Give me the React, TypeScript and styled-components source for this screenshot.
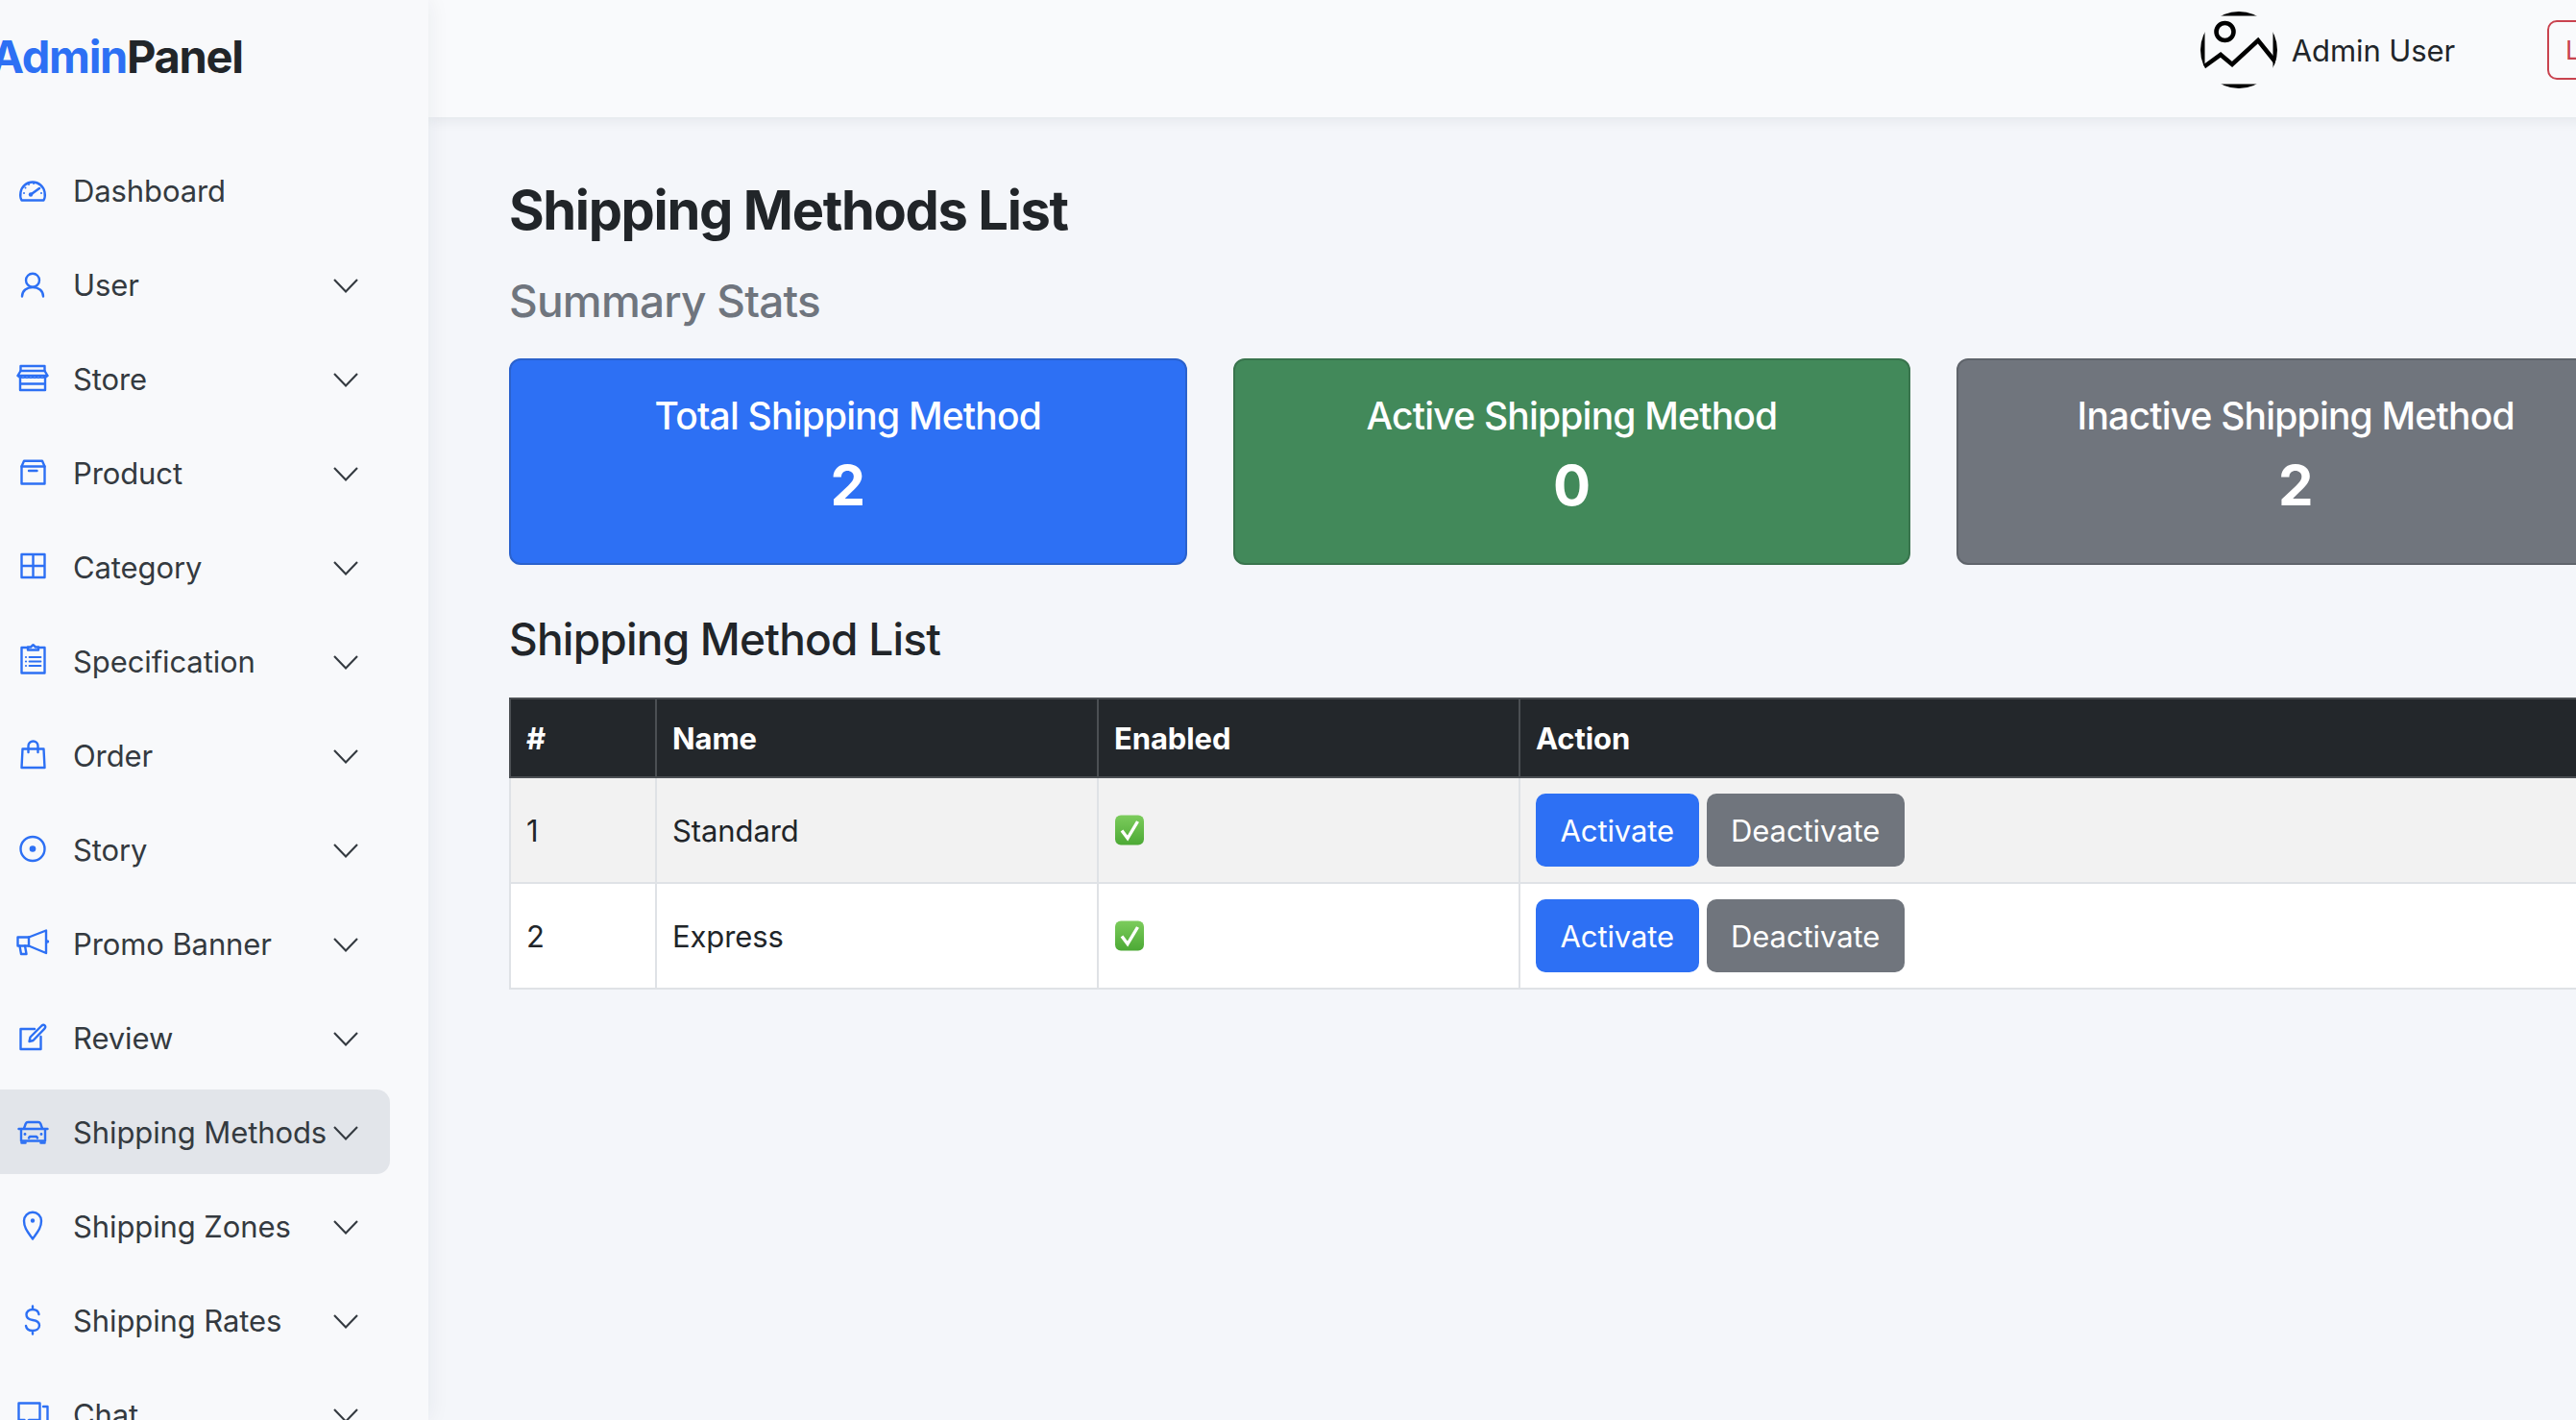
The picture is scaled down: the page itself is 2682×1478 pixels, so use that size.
import React from "react";
import styled, { createGlobalStyle } from "styled-components";

const GlobalStyle = createGlobalStyle`
  html, body {
    margin: 0;
    height: 100%;
    overflow: hidden;
    background: #f4f6fa;
    font-family: "Inter", "Liberation Sans", sans-serif;
    color: #212529;
  }
  * {
    box-sizing: border-box;
  }
`;

const Shell = styled.div`
  display: flex;
  width: 2843px;
  height: 1478px;
  margin-left: -18px;
  overflow: hidden;
`;

const Sidebar = styled.aside`
  flex: 0 0 464px;
  height: 1478px;
  background: #f8f9fb;
  box-shadow: 0 0 22px rgba(30, 40, 60, 0.07);
  overflow: hidden;
  position: relative;
  z-index: 2;
`;

const Logo = styled.div`
  height: 122px;
  padding: 35px 0 0 8px;
  font-size: 47px;
  line-height: 48px;
  font-weight: 700;
  letter-spacing: -1.3px;
  color: #212529;

  span {
    color: #2d70f4;
  }
`;

const Menu = styled.nav`
  display: flex;
  flex-direction: column;
  gap: 10px;
  padding: 32px 40px 0 0;
`;

const MenuItem = styled.a<{ $active?: boolean }>`
  display: flex;
  align-items: center;
  height: 88px;
  flex: none;
  padding: 0 33px 0 35px;
  border-radius: 0 14px 14px 0;
  font-size: 31px;
  letter-spacing: -0.1px;
  color: #343a40;
  background: ${(p) => (p.$active ? "#e2e5ea" : "transparent")};
`;

const MenuLabel = styled.span`
  margin-left: 25px;
  white-space: nowrap;
`;

const Chevron = styled.svg`
  flex: none;
  width: 26px;
  height: 15px;
  margin: 2px 0 0 auto;
  fill: none;
  stroke: #343a40;
  stroke-width: 2.1;
`;

const Glyph = styled.svg`
  flex: none;
  width: 34px;
  height: 34px;
  margin-top: 1px;
  overflow: visible;
  fill: none;
  stroke: #2d70f4;
  stroke-width: 2.4;
  stroke-linejoin: round;
  stroke-linecap: round;

  .solid {
    fill: #2d70f4;
    stroke: none;
  }
`;

const Main = styled.div`
  flex: 0 0 2379px;
  display: flex;
  flex-direction: column;
`;

const TopBar = styled.header`
  flex: none;
  height: 122px;
  display: flex;
  align-items: center;
  justify-content: flex-end;
  padding: 0 43px 18px 0;
  background: #f9fafc;
  box-shadow: 0 2px 14px rgba(30, 40, 60, 0.09);
`;

const UserName = styled.span`
  margin: 0 96px 0 15px;
  font-size: 31px;
  letter-spacing: -0.1px;
  color: #212529;
`;

const LogoutButton = styled.button`
  width: 130px;
  height: 62px;
  padding: 0 0 0 17px;
  text-align: left;
  background: transparent;
  border: 2px solid #c9434f;
  border-radius: 10px;
  font: inherit;
  font-size: 27px;
  color: #c9434f;
`;

const Content = styled.main`
  padding: 0 82px 0 84px;
`;

const PageTitle = styled.h1`
  margin: 62px 0 0;
  font-size: 56px;
  line-height: 70px;
  font-weight: 700;
  letter-spacing: -1.35px;
  color: #212529;
`;

const SubTitle = styled.h2<{ $muted?: boolean }>`
  margin: ${(p) => (p.$muted ? "31px 0 32px" : "49px 0 33px")};
  font-size: 46px;
  line-height: 56px;
  font-weight: 500;
  letter-spacing: -0.78px;
  color: ${(p) => (p.$muted ? "#6f757e" : "#212529")};
`;

const StatGrid = styled.section`
  display: grid;
  grid-template-columns: repeat(3, 1fr);
  gap: 48px;
`;

const StatCard = styled.div<{ $bg: string; $line: string }>`
  height: 215px;
  padding-top: 33px;
  border: 2px solid ${(p) => p.$line};
  border-radius: 12px;
  background: ${(p) => p.$bg};
  color: #fff;
  text-align: center;
`;

const StatTitle = styled.div`
  font-size: 39px;
  line-height: 50px;
  font-weight: 500;
  letter-spacing: -0.8px;
`;

const StatValue = styled.div`
  margin-top: 12px;
  font-size: 58px;
  line-height: 70px;
  font-weight: 700;
`;

const Table = styled.table`
  width: 100%;
  table-layout: fixed;
  border-collapse: collapse;
  font-size: 31px;
  letter-spacing: -0.1px;
  color: #212529;
`;

const HeadCell = styled.th<{ $w?: number }>`
  width: ${(p) => (p.$w ? `${p.$w}px` : "auto")};
  height: 82px;
  padding: 0 16px;
  text-align: left;
  font-weight: 700;
  color: #fff;
  background: #23272b;
  border: 2px solid #4b4f53;
`;

const Row = styled.tr<{ $striped?: boolean }>`
  background: ${(p) => (p.$striped ? "#f2f2f2" : "#ffffff")};
`;

const Cell = styled.td`
  height: 110px;
  padding: 0 16px;
  border: 2px solid #dfe2e6;
`;

const ActionRow = styled.div`
  display: flex;
  gap: 8px;
`;

const ActionButton = styled.button<{ $bg: string }>`
  height: 76px;
  padding: 0 25.5px;
  border: none;
  border-radius: 10px;
  font: inherit;
  letter-spacing: inherit;
  color: #fff;
  background: ${(p) => p.$bg};
`;

const CheckMark = styled.svg`
  display: block;
  width: 32px;
  height: 32px;
`;

const icons: Record<string, React.ReactNode> = {
  gauge: (
    <>
      <path d="M5.5 26.5C4.3 24.5 4 21 4.5 18A12.7 12.7 0 0 1 29.5 18C30 21 29.7 24.5 28.5 26.5Z" />
      <path d="M15 20.5L24 14" strokeWidth="2.6" />
      <circle className="solid" cx="15" cy="20.5" r="2.2" />
      <circle className="solid" cx="8" cy="19" r="1" />
      <circle className="solid" cx="9.5" cy="13.5" r="1" />
      <circle className="solid" cx="13" cy="10" r="1" />
      <circle className="solid" cx="18" cy="9" r="1" />
      <circle className="solid" cx="26" cy="19" r="1" />
    </>
  ),
  user: (
    <>
      <circle cx="17" cy="11.7" r="7" />
      <path d="M6 28.5C6 22.5 11 19 17 19S28 22.5 28 28.5" />
    </>
  ),
  store: (
    <>
      <path d="M4.5 3H29.5V8H4.5Z" />
      <path d="M4.5 8L1.5 13H32.5L29.5 8" />
      <path d="M1.5 13Q3 16 5 14.5Q7 16 9 14.5Q11 16 13 14.5Q15 16 17 14.5Q19 16 21 14.5Q23 16 25 14.5Q27 16 29 14.5Q31 16 32.5 13" strokeWidth="1.6" />
      <path d="M4 15.5V28H30V15.5M4 21.5H30" />
    </>
  ),
  box: (
    <>
      <path d="M5.5 9.5L8 3.8H27L29.5 9.5V27.5H5.5Z" />
      <path d="M5.5 9.5H29.5M13 14H21.5" />
    </>
  ),
  grid: <path d="M5.5 3H29.5V27H5.5ZM17.5 3V27M5.5 15H29.5" />,
  clipboard: (
    <>
      <path d="M12 2H5.5V28.5H29.5V2H23" />
      <path d="M12 4.5V1.5H15L17.5 -0.8L20 1.5H23V4.5Z" />
      <path d="M13.5 12H25.5M13.5 16.5H25.5M13.5 21H25.5" strokeWidth="1.8" />
      <circle className="solid" cx="10" cy="12" r="1.1" />
      <circle className="solid" cx="10" cy="16.5" r="1.1" />
      <circle className="solid" cx="10" cy="21" r="1.1" />
    </>
  ),
  bag: (
    <>
      <path d="M6.5 9.5H28.5L29.5 29H5.5Z" />
      <path d="M12.5 13V6.5A5 5 0 0 1 22.5 6.5V13" />
    </>
  ),
  record: (
    <>
      <circle cx="17" cy="15.5" r="12.5" />
      <circle className="solid" cx="17" cy="15.5" r="3.3" />
    </>
  ),
  megaphone: (
    <>
      <path d="M1.5 9.5H13L31 2.5V26L13 18.5H1.5Z" />
      <path d="M13 9.5V18.5M3.5 18.5L5 27H10.5L9 18.5" />
      <circle className="solid" cx="32.5" cy="14" r="1.7" />
    </>
  ),
  review: (
    <>
      <path d="M19 7H4.5V28H25.5V15" />
      <path d="M13.5 20L14.5 15.5L26.5 3.5C27.8 2.4 29.2 2.6 29.9 3.6C30.5 4.6 30.2 5.8 29.2 6.8L17.5 19Z" />
    </>
  ),
  car: (
    <>
      <path d="M8 12.5L9.8 7.5Q10.5 6 12 6H23Q24.5 6 25.2 7.5L27 12.5" />
      <path d="M6 13H29Q30 13 30 14V25.5H5V14Q5 13 6 13Z" />
      <path d="M2.5 13H5.5M29.5 13H32.5M13 22.5L14 21H21L22 22.5" />
      <path d="M5.5 27.5H9.5M25.5 27.5H29.5" strokeWidth="2.6" />
      <circle className="solid" cx="9" cy="18.5" r="1.4" />
      <circle className="solid" cx="26" cy="18.5" r="1.4" />
    </>
  ),
  pin: (
    <>
      <path d="M17 29.5C12.5 23 8 18.5 8 10.8A9 9 0 0 1 26 10.8C26 18.5 21.5 23 17 29.5Z" />
      <circle className="solid" cx="17" cy="10.5" r="2.2" />
    </>
  ),
  dollar: (
    <path d="M23.5 10C23 7 20.5 5 17 5C13 5 10.5 7.2 10.5 10.5C10.5 14 13.5 15.5 17 16C21 16.6 24 18 24 21.5C24 25 21 27 17 27C13 27 10.5 25 10 22M17 1.5V5M17 27V30.5" />
  ),
  chat: (
    <>
      <path d="M2.5 4.5H24.5V22H13L8.5 27V22H2.5Z" />
      <path d="M28 8H32.5V26" />
    </>
  ),
};

const menu = [
  { label: "Dashboard", icon: "gauge", plain: true },
  { label: "User", icon: "user" },
  { label: "Store", icon: "store" },
  { label: "Product", icon: "box" },
  { label: "Category", icon: "grid" },
  { label: "Specification", icon: "clipboard" },
  { label: "Order", icon: "bag" },
  { label: "Story", icon: "record" },
  { label: "Promo Banner", icon: "megaphone" },
  { label: "Review", icon: "review" },
  { label: "Shipping Methods", icon: "car", active: true },
  { label: "Shipping Zones", icon: "pin" },
  { label: "Shipping Rates", icon: "dollar" },
  { label: "Chat", icon: "chat" },
];

const stats = [
  { title: "Total Shipping Method", value: 2, bg: "#2d70f4", line: "#2a61cc" },
  { title: "Active Shipping Method", value: 0, bg: "#42895a", line: "#39744d" },
  { title: "Inactive Shipping Method", value: 2, bg: "#70757d", line: "#5f646b" },
];

const methods = [
  { id: 1, name: "Standard" },
  { id: 2, name: "Express" },
];

function Avatar() {
  return (
    <svg width="80" height="80" viewBox="0 0 80 80" fill="none" stroke="#000" style={{ flex: "none" }}>
      <defs>
        <clipPath id="avatar-clip">
          <circle cx="40" cy="40" r="40" />
        </clipPath>
      </defs>
      <g clipPath="url(#avatar-clip)">
        <rect x="0" y="0" width="80" height="80" strokeWidth="9" />
        <circle cx="25.5" cy="21" r="9" strokeWidth="4.6" />
        <path d="M3 58L21 45L33 55L60 30L80 55" strokeWidth="4.6" />
      </g>
    </svg>
  );
}

function EnabledMark() {
  return (
    <CheckMark viewBox="0 0 32 32">
      <defs>
        <linearGradient id="check-bg" x1="0" y1="0" x2="0" y2="1">
          <stop offset="0" stopColor="#7ccc5c" />
          <stop offset="1" stopColor="#4ca935" />
        </linearGradient>
      </defs>
      <rect x="1" y="0.5" width="30" height="31" rx="6" fill="url(#check-bg)" />
      <path d="M8 16.5L14 24.5L24.5 7" fill="none" stroke="#fff" strokeWidth="3.4" />
    </CheckMark>
  );
}

export default function App() {
  return (
    <>
      <GlobalStyle />
      <Shell>
        <Sidebar>
          <Logo>
            <span>Admin</span>Panel
          </Logo>
          <Menu>
            {menu.map((item) => (
              <MenuItem key={item.label} $active={item.active}>
                <Glyph viewBox="0 0 34 34">{icons[item.icon]}</Glyph>
                <MenuLabel>{item.label}</MenuLabel>
                {!item.plain && (
                  <Chevron viewBox="0 0 26 15">
                    <path d="M1 1L13 13.5L25 1" />
                  </Chevron>
                )}
              </MenuItem>
            ))}
          </Menu>
        </Sidebar>
        <Main>
          <TopBar>
            <Avatar />
            <UserName>Admin User</UserName>
            <LogoutButton>Logout</LogoutButton>
          </TopBar>
          <Content>
            <PageTitle>Shipping Methods List</PageTitle>
            <SubTitle $muted>Summary Stats</SubTitle>
            <StatGrid>
              {stats.map((s) => (
                <StatCard key={s.title} $bg={s.bg} $line={s.line}>
                  <StatTitle>{s.title}</StatTitle>
                  <StatValue>{s.value}</StatValue>
                </StatCard>
              ))}
            </StatGrid>
            <SubTitle>Shipping Method List</SubTitle>
            <Table>
              <thead>
                <tr>
                  <HeadCell $w={152}>#</HeadCell>
                  <HeadCell $w={460}>Name</HeadCell>
                  <HeadCell $w={439}>Enabled</HeadCell>
                  <HeadCell>Action</HeadCell>
                </tr>
              </thead>
              <tbody>
                {methods.map((m, i) => (
                  <Row key={m.id} $striped={i % 2 === 0}>
                    <Cell>{m.id}</Cell>
                    <Cell>{m.name}</Cell>
                    <Cell>
                      <EnabledMark />
                    </Cell>
                    <Cell>
                      <ActionRow>
                        <ActionButton $bg="#2d70f4">Activate</ActionButton>
                        <ActionButton $bg="#70757d">Deactivate</ActionButton>
                      </ActionRow>
                    </Cell>
                  </Row>
                ))}
              </tbody>
            </Table>
          </Content>
        </Main>
      </Shell>
    </>
  );
}
